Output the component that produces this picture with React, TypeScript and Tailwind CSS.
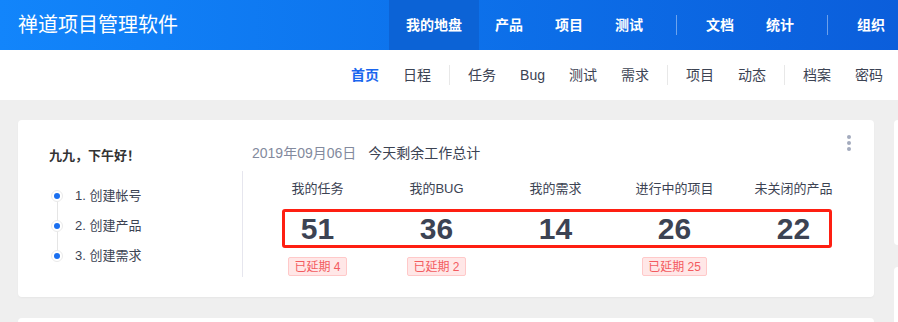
const font = "font-['Liberation_Sans','Noto_Sans_CJK_SC',sans-serif]";

const mainNav = ["产品", "项目", "测试", "|", "文档", "统计", "|", "组织"];
const subNav = ["日程", "|", "任务", "Bug", "测试", "需求", "|", "项目", "动态", "|", "档案", "密码"];

const steps = ["1. 创建帐号", "2. 创建产品", "3. 创建需求"];

const stats = [
  { label: "我的任务", value: 51, delay: 4 },
  { label: "我的BUG", value: 36, delay: 2 },
  { label: "我的需求", value: 14 },
  { label: "进行中的项目", value: 26, delay: 25 },
  { label: "未关闭的产品", value: 22 },
];

export default function App() {
  return (
    <div className={`w-[898px] h-[322px] overflow-hidden bg-[#efefef] ${font}`}>
      {/* top bar */}
      <header className="h-[50px] flex items-center bg-gradient-to-r from-[#1285fb] to-[#0b5edb] text-white whitespace-nowrap">
        <div className="pl-[18px] text-[20px] leading-[50px] w-[178px] shrink-0">禅道项目管理软件</div>
        <nav className="ml-[211px] flex items-center h-full shrink-0 text-[14px] font-bold">
          <a className="h-full flex items-center px-[17px] bg-[#0c63d6]">我的地盘</a>
          {mainNav.map((item, i) =>
            item === "|" ? (
              <span key={i} className="ml-[17px] mr-[13px] w-px h-[20px] bg-white/40" />
            ) : (
              <a key={i} className="h-full flex items-center px-[16px]">
                {item}
              </a>
            )
          )}
        </nav>
      </header>

      {/* sub nav */}
      <div className="h-[50px] bg-white flex items-center justify-end pr-[3px] text-[14px] text-[#3c4353]">
        <a className="px-[12px] font-bold text-[#1a66ee]">首页</a>
        {subNav.map((item, i) =>
          item === "|" ? (
            <span key={i} className="mx-[6px] w-px h-[20px] bg-[#e8e8e8]" />
          ) : (
            <a key={i} className="px-[12px]">
              {item}
            </a>
          )
        )}
      </div>

      {/* content */}
      <div className="flex gap-[20px] pl-[18px] pt-[20px]">
        <div className="w-[856px] shrink-0 flex flex-col gap-[21px]">
          <div className="relative h-[177px] bg-white rounded-[4px] shadow-[0_1px_2px_rgba(0,0,0,0.04)] flex">
            {/* greeting + steps */}
            <div className="w-[224px] shrink-0 pl-[31px] pt-[26px] text-[13px] text-[#3c4353]">
              <div className="h-[20px] leading-[20px] font-bold text-[#333]">九九，下午好！</div>
              <div className="relative mt-[15px]">
                <span className="absolute left-[8px] top-[15px] h-[60px] w-px bg-[#e5e5e5]" />
                {steps.map((s) => (
                  <div key={s} className="relative h-[30px] flex items-center">
                    <span className="w-[12px] h-[12px] ml-[2px] rounded-full bg-white border border-[#eaeaea] flex items-center justify-center">
                      <span className="w-[6px] h-[6px] rounded-full bg-[#1a6ff0]" />
                    </span>
                    <span className="ml-[12px] leading-[20px]">{s}</span>
                  </div>
                ))}
              </div>
            </div>

            {/* summary */}
            <div className="flex-1 pt-[23px]">
              <div className="pl-[10px] h-[20px] leading-[20px] text-[14px] flex gap-[12px]">
                <span className="text-[#838a9d]">2019年09月06日</span>
                <span className="text-[#3c4353]">今天剩余工作总计</span>
              </div>
              <div className="mt-[8px] h-[106px] border-l border-[#e6e6ee] pl-[15px] pt-[8px]">
                <div className="w-[595px] grid grid-cols-5 text-[13px] text-[#3c4353] leading-[20px]">
                  {stats.map((s) => (
                    <div key={s.label} className="text-center">
                      {s.label}
                    </div>
                  ))}
                </div>
                <div className="relative mt-[10px] w-[595px] h-[39px] grid grid-cols-5">
                  {stats.map((s) => (
                    <div key={s.label} className="flex items-center justify-center text-[30px] font-bold text-[#3c4353] leading-none pt-[1px]">
                      {s.value}
                    </div>
                  ))}
                  <div className="absolute top-0 bottom-0 left-[24px] right-[21px] border-[3px] border-[#fe1f12] rounded-[3px]" />
                </div>
                <div className="mt-[9px] w-[595px] grid grid-cols-5">
                  {stats.map((s) => (
                    <div key={s.label} className="flex justify-center">
                      {s.delay !== undefined && (
                        <span className="h-[19px] px-[5px] flex items-center text-[12px] text-[#f35b5f] bg-[#ffe7e7] border border-[#ffc9c9] rounded-[2px]">
                          已延期 {s.delay}
                        </span>
                      )}
                    </div>
                  ))}
                </div>
              </div>
            </div>

            {/* more */}
            <div className="absolute right-[23px] top-[15px] flex flex-col gap-[2px]">
              <span className="w-[4px] h-[4px] rounded-full bg-[#a3abbd]" />
              <span className="w-[4px] h-[4px] rounded-full bg-[#a3abbd]" />
              <span className="w-[4px] h-[4px] rounded-full bg-[#a3abbd]" />
            </div>
          </div>
          <div className="h-[100px] bg-white rounded-[4px]" />
        </div>

        <div className="w-[300px] shrink-0 flex flex-col gap-[22px]">
          <div className="h-[125px] bg-white rounded-[4px]" />
          <div className="h-[125px] bg-white rounded-[4px]" />
        </div>
      </div>
    </div>
  );
}
